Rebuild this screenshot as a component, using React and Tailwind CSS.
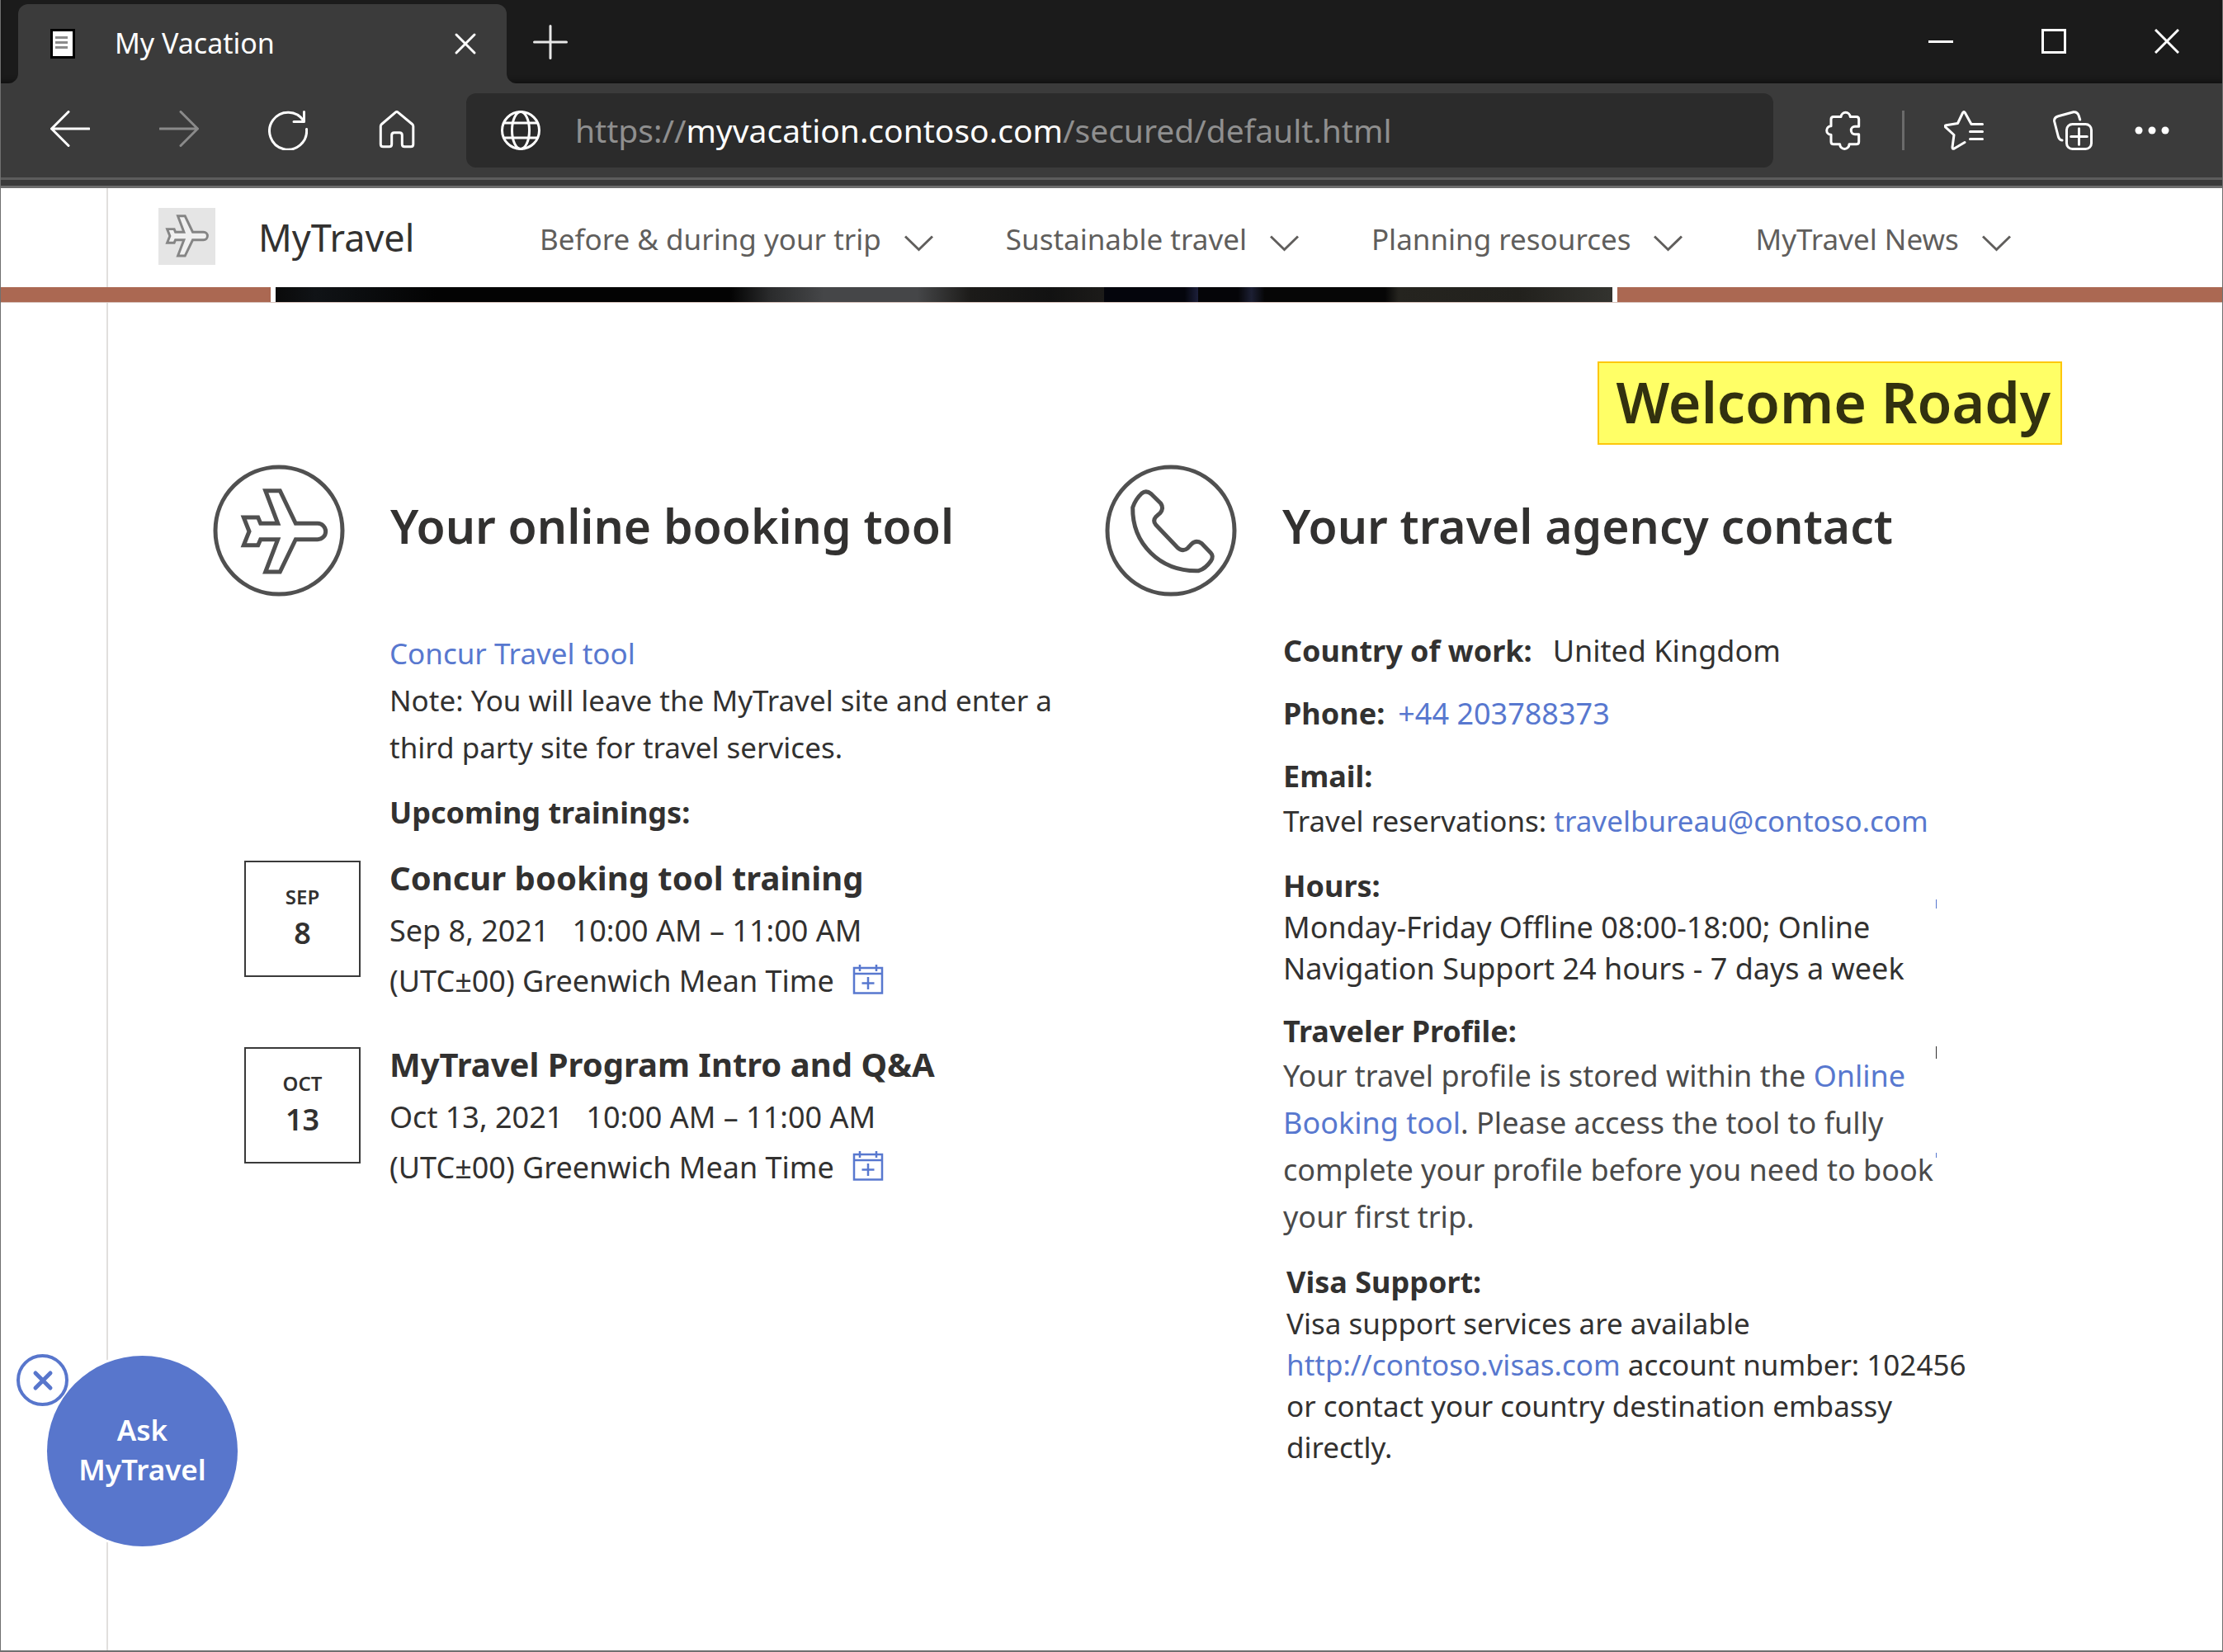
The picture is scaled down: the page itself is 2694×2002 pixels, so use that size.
import React from "react";

const NAV_ITEMS = [
  "Before & during your trip",
  "Sustainable travel",
  "Planning resources",
  "MyTravel News",
];

const TRAININGS = [
  { month: "SEP", day: "8", title: "Concur booking tool training", date: "Sep 8, 2021" },
  { month: "OCT", day: "13", title: "MyTravel Program Intro and Q&A", date: "Oct 13, 2021" },
];

function Icon({ children, className = "", size = 48 }) {
  return (
    <svg
      width={size}
      height={size}
      viewBox="0 0 48 48"
      fill="none"
      stroke="currentColor"
      strokeWidth="3"
      strokeLinecap="round"
      strokeLinejoin="round"
      aria-hidden="true"
      className={"shrink-0 " + className}
    >
      {children}
    </svg>
  );
}

function ToolButton({ label, children, className = "" }) {
  return (
    <button type="button" aria-label={label} className={"flex shrink-0 items-center justify-center " + className}>
      {children}
    </button>
  );
}

function TabStrip() {
  return (
    <div className="flex h-[101px] items-end bg-[#1b1b1b] text-white shadow-[inset_0_-6px_6px_-4px_#0f0f0f]">
      <div className="relative ml-[21px] flex h-24 w-[592px] items-center rounded-t-xl bg-[#3b3b3b] pr-9 pl-[39px]">
        <svg width="30" height="36" viewBox="0 0 30 36" className="shrink-0" aria-hidden="true">
          <rect width="30" height="36" fill="#000" />
          <rect x="3" y="3" width="24" height="30" fill="#fff" />
          <path d="M6 10.500h15M6 16.500h15M6 22.500h15" stroke="#8c8c8c" strokeWidth="3" />
        </svg>
        <span className="ml-12 flex-1 pb-0.5 text-[34px] leading-[48px]">My Vacation</span>
        <button type="button" aria-label="Close tab">
          <svg width="28" height="28" viewBox="0 0 28 28" stroke="#fff" strokeWidth="3" strokeLinecap="round" aria-hidden="true">
            <path d="M3 3l22 22M25 3L3 25" />
          </svg>
        </button>
        <svg width="12" height="12" viewBox="0 0 12 12" fill="#3b3b3b" className="absolute bottom-0 -left-3" aria-hidden="true">
          <path d="M12 0v12H0A12 12 0 0 0 12 0Z" />
        </svg>
        <svg width="12" height="12" viewBox="0 0 12 12" fill="#3b3b3b" className="absolute -right-3 bottom-0" aria-hidden="true">
          <path d="M0 0v12h12A12 12 0 0 1 0 0Z" />
        </svg>
      </div>
      <button type="button" aria-label="New tab" className="mb-[29px] ml-8">
        <svg width="42" height="42" viewBox="0 0 42 42" stroke="#e8e8e8" strokeWidth="3" strokeLinecap="round" aria-hidden="true">
          <path d="M21 1.500v39M1.500 21h39" />
        </svg>
      </button>
      <div className="ml-auto flex items-center gap-[107px] self-start pt-[35px] pr-[52px]">
        <button type="button" aria-label="Minimize">
          <svg width="30" height="30" viewBox="0 0 30 30" stroke="#fff" strokeWidth="3" aria-hidden="true">
            <path d="M0 15.500h30" />
          </svg>
        </button>
        <button type="button" aria-label="Maximize">
          <svg width="30" height="30" viewBox="0 0 30 30" fill="none" stroke="#fff" strokeWidth="3" aria-hidden="true">
            <rect x="1.500" y="1.500" width="27" height="27" />
          </svg>
        </button>
        <button type="button" aria-label="Close window">
          <svg width="30" height="30" viewBox="0 0 30 30" stroke="#fff" strokeWidth="3" aria-hidden="true">
            <path d="M1 1l28 28M29 1L1 29" />
          </svg>
        </button>
      </div>
    </div>
  );
}

function Toolbar() {
  return (
    <div className="flex h-[114px] items-center bg-[#3b3b3b] pl-[60px] pr-[61px] text-white">
      <div className="flex items-center gap-[84px]">
        <ToolButton label="Back">
          <Icon>
            <path d="M47 22H1.500M22 1.500L1.500 22 22 42.500" />
          </Icon>
        </ToolButton>
        <ToolButton label="Forward" className="text-[#8a8a8a]">
          <Icon>
            <path d="M1 22h45.500M26 1.500L46.500 22 26 42.500" />
          </Icon>
        </ToolButton>
        <ToolButton label="Refresh">
          <Icon>
            <path d="M46.500 22.500A22.500 22.500 0 1 1 43 12.500M43.500 1.500v12H31" />
          </Icon>
        </ToolButton>
        <ToolButton label="Home">
          <Icon>
            <path d="M22.300 2.200q1.500-1.300 3 0L42.600 16.500q1.200 1 1.200 2.500v21.700q0 3-3 3h-7.500q-3 0-3-3v-11q0-3-3-3h-6.600q-3 0-3 3v11q0 3-3 3H7.300q-3 0-3-3V19q0-1.500 1.200-2.500Z" />
          </Icon>
        </ToolButton>
      </div>
      <div className="ml-[60px] flex h-[90px] flex-1 items-center rounded-xl bg-[#2b2b2b] pl-[42px]">
        <Icon>
          <circle cx="24" cy="24" r="22.500" />
          <ellipse cx="24" cy="24" rx="10.500" ry="22.500" />
          <path d="M3.500 15h41M3.500 33h41" />
        </Icon>
        <div
          role="textbox"
          aria-label="Address"
          contentEditable
          suppressContentEditableWarning
          className="ml-[42px] flex-1 text-[39px] leading-[56px] text-[#8f8f8f] outline-none"
        >
          https://<span className="text-white">myvacation.contoso.com</span>/secured/default.html
        </div>
      </div>
      <ToolButton label="Extensions" className="ml-[60px]">
        <Icon>
          <path d="M10 18.700V10.500q0-3 3-3h9a5.700 6 0 0 1 11.300 0h7.400q3 0 3 3v8.800H39a4.700 4.700 0 0 0 0 9.400h4.700V37.700q0 3-3 3H32a5.600 5.700 0 0 1-11.300 0H13q-3 0-3-3v-8.400a5.300 5.300 0 0 1 0-10.600Z" />
        </Icon>
      </ToolButton>
      <div className="ml-12 h-12 w-[3px] bg-[#6b6b6b]" />
      <ToolButton label="Favorites" className="ml-12">
        <Icon>
          <path d="M46.500 16.500H33L25.300 2.500q-1.300-2-2.600 0L16.500 15.500 2.500 17.700q-2.500.600-.700 2.500L12 29.500 10 44.500q0 2.500 2.300 1.500L25 38.500M31.500 25.500h15M31.500 34.500h15" />
        </Icon>
      </ToolButton>
      <ToolButton label="Collections" className="ml-[84px]">
        <Icon>
          <path d="M32.700 11L31.300 6.500q-1.500-5.200-6.500-4.800L6.500 6.700Q1 8.200 1.600 13L6.500 32q1.300 3.500 4.500 4" />
          <rect x="16.500" y="16.500" width="30" height="30" rx="7" />
          <path d="M31.500 21.700v19.600M21.700 31.500h19.600" />
        </Icon>
      </ToolButton>
      <ToolButton label="Settings and more" className="ml-12">
        <Icon>
          <g fill="currentColor" stroke="none">
            <circle cx="8" cy="24" r="4.500" />
            <circle cx="24" cy="24" r="4.500" />
            <circle cx="40" cy="24" r="4.500" />
          </g>
        </Icon>
      </ToolButton>
    </div>
  );
}

const PLANE_PATH =
  "M63.700 31.700H81.300L100.300 71.300H127a9.700 9.700 0 0 1 0 19.400H100.300L81.300 130H63.700L78.700 90.700H57.700L54.700 97.700H37.300L44 81 37.300 64H54.700L57.700 71.300H78.700Z";

function SiteHeader() {
  return (
    <header className="flex h-[120px] items-center pl-[62px] text-[#605e5c]">
      <span className="mb-1 flex h-[69px] w-[69px] items-center justify-center bg-[#e5e5e5]">
        <svg width="56" height="56" viewBox="30 24 114 114" fill="#f0f0f0" stroke="#858585" strokeWidth="6" aria-hidden="true">
          <path d={PLANE_PATH} />
        </svg>
      </span>
      <a href="#home" className="ml-[52px] w-[341px] text-[45px] leading-[64px] text-[#323130]">
        MyTravel
      </a>
      <nav className="mt-1 flex gap-[88px]">
        {NAV_ITEMS.map((item) => (
          <button key={item} type="button" className="flex items-center gap-7 text-[35px] leading-[48px] whitespace-nowrap">
            {item}
            <svg width="35" height="20" viewBox="0 0 35 20" fill="none" stroke="currentColor" strokeWidth="3" className="mt-2.5" aria-hidden="true">
              <path d="M1 1.500l16.500 16L34 1.500" />
            </svg>
          </button>
        ))}
      </nav>
    </header>
  );
}

function Banner() {
  return (
    <div className="flex h-[19px] gap-1.5 border-b border-[#d8c4bd]">
      <div className="w-[327px] bg-[#ab6852]" />
      <div className="flex-[1621] bg-[linear-gradient(90deg,#0a0a0a_0%,#101316_3%,#030303_12%,#030303_34%,#2a2b2c_37%,#454648_41%,#454648_48%,#1c1b19_52%,#121212_58%,#1c1b19_62%,#04050c_62%,#04050c_68%,#1c1f3a_69%,#050508_69%,#050508_72%,#1c1f33_73%,#060606_74%,#060606_83%,#25241f_84%,#22211d_93%,#33332f_100%)]" />
      <div className="flex-[734] bg-[#ab6852]" />
    </div>
  );
}

function Link({ children, href = "#link" }) {
  return (
    <a href={href} className="text-[#5878cf]">
      {children}
    </a>
  );
}

function SectionHead({ icon, title }) {
  return (
    <div className="flex items-center gap-[55px]">
      <svg width="160" height="160" viewBox="0 0 160 160" fill="none" stroke="#505050" strokeWidth="5" strokeLinejoin={icon === "phone" ? "round" : "miter"} aria-hidden="true" className="shrink-0">
        <circle cx="80" cy="80" r="77" />
        {icon === "plane" ? (
          <path d={PLANE_PATH} />
        ) : (
          <path d="M33.700 52Q37 42 44.500 35 50 30.500 56 35.500L67.700 47q4 6-.700 11.700l-5.300 4.600q-4 4.700 0 9.700l26 27.300q6.600 6 12.600 1l4.700-5Q110.300 91 117 95.300L128.300 107q4 4.300 0 10Q122 126 113.700 128.700C66 130 33 95 33.700 52Z" />
        )}
      </svg>
      <h2 className="pb-3 text-[57px] leading-[80px] font-semibold whitespace-nowrap">{title}</h2>
    </div>
  );
}

function Training({ month, day, title, date }) {
  return (
    <li className="flex gap-[35px] pl-[38px]">
      <div className="mt-3 flex h-[141px] w-[141px] shrink-0 flex-col items-center border-2 border-[#3a3a3a] pt-[26px] font-semibold">
        <span className="text-[24px] leading-8">{month}</span>
        <span className="text-[36px] leading-[56px]">{day}</span>
      </div>
      <div>
        <h3 className="text-[40px] leading-[66px] font-bold whitespace-nowrap">{title}</h3>
        <p className="flex gap-7 leading-[61px]">
          <span>{date}</span>
          <span>10:00 AM – 11:00 AM</span>
        </p>
        <p className="flex items-center gap-[22px] leading-[61px]">
          (UTC±00) Greenwich Mean Time
          <button type="button" aria-label={"Add " + title + " to calendar"} className="pb-1 text-[#5878cf]">
            <svg width="38" height="36" viewBox="0 0 38 36" fill="none" stroke="currentColor" strokeWidth="2.500" aria-hidden="true">
              <path d="M2 4h34v30.500H2ZM2 11h34M9 0v8M29 0v8M19 15v15M11.500 22.500h15" />
            </svg>
          </button>
        </p>
      </div>
    </li>
  );
}

function BookingColumn() {
  return (
    <section>
      <SectionHead icon="plane" title="Your online booking tool" />
      <p className="mt-10 ml-[214px] text-[35px] leading-[57px] whitespace-nowrap">
        <Link>Concur Travel tool</Link>
        <br />
        Note: You will leave the MyTravel site and enter a
        <br />
        third party site for travel services.
      </p>
      <h3 className="mt-[22px] ml-[214px] leading-[57px] font-bold">Upcoming trainings:</h3>
      <ul className="mt-[18px] flex flex-col gap-[38px]">
        {TRAININGS.map((t) => (
          <Training key={t.title} {...t} />
        ))}
      </ul>
    </section>
  );
}

function ContactColumn() {
  return (
    <section>
      <SectionHead icon="phone" title="Your travel agency contact" />
      <div className="mt-[41px] ml-[216px] flex flex-col gap-[26px] leading-[50px] whitespace-nowrap">
        <p className="flex gap-[25px]">
          <b>Country of work:</b>
          <span>United Kingdom</span>
        </p>
        <p className="flex gap-4">
          <b>Phone:</b>
          <Link href="tel:+44203788373">+44 203788373</Link>
        </p>
        <div>
          <h3 className="font-bold">Email:</h3>
          <p className="text-[35px] leading-[57px]">
            Travel reservations: <Link href="mailto:travelbureau@contoso.com">travelbureau@contoso.com</Link>
          </p>
        </div>
        <div className="relative">
          <h3 className="font-bold">Hours:</h3>
          <p>
            Monday-Friday Offline 08:00-18:00; Online
            <br />
            Navigation Support 24 hours - 7 days a week
          </p>
          <span className="absolute top-[41px] left-[791px] h-[11px] w-px bg-[#5878cf]" />
        </div>
        <div className="relative">
          <h3 className="font-bold">Traveler Profile:</h3>
          <p className="leading-[57px] text-[#4a4a4a]">
            Your travel profile is stored within the{" "}
            <Link>
              Online
              <br />
              Booking tool
            </Link>
            . Please access the tool to fully
            <br />
            complete your profile before you need to book
            <br />
            your first trip.
          </p>
          <span className="absolute top-[43px] left-[791px] h-[15px] w-px bg-[#323130]" />
          <span className="absolute top-[172px] left-[791px] h-1.5 w-px bg-[#5878cf]" />
        </div>
        <div className="pl-1">
          <h3 className="font-bold">Visa Support:</h3>
          <p className="text-[35px]">
            Visa support services are available
            <br />
            <Link href="http://contoso.visas.com">http://contoso.visas.com</Link> account number: 102456
            <br />
            or contact your country destination embassy
            <br />
            directly.
          </p>
        </div>
      </div>
    </section>
  );
}

function ChatBubble() {
  return (
    <div className="absolute bottom-[126px] left-[19px]">
      <button
        type="button"
        className="mt-0.5 ml-[37px] flex h-[231px] w-[231px] items-center justify-center rounded-full bg-[#5876cc] pb-1 text-center text-[35px] leading-[48px] font-semibold text-white ring-3 ring-white"
      >
        Ask
        <br />
        MyTravel
      </button>
      <button
        type="button"
        aria-label="Dismiss chat"
        className="absolute top-0 left-0 flex h-[63px] w-[63px] items-center justify-center rounded-full border-4 border-[#5876cc] bg-white"
      >
        <svg width="26" height="26" viewBox="0 0 26 26" stroke="#5876cc" strokeWidth="5" strokeLinecap="round" aria-hidden="true">
          <path d="M4 4l18 18M22 4L4 22" />
        </svg>
      </button>
    </div>
  );
}

export default function App() {
  return (
    <div className="relative flex min-h-screen flex-col border-x border-b-2 border-[#707070] bg-white font-['Noto_Sans',sans-serif] text-[36px] text-[#323130]">
      <TabStrip />
      <Toolbar />
      <div className="h-[13px] border-y-3 border-t-[#5c5c5c] border-b-[#6e6e6e] bg-[#3b3b3b]" />
      <div className="flex flex-1 flex-col bg-[linear-gradient(#e1dfdd,#e1dfdd)] bg-[size:2px_100%] bg-[position:128px_0] bg-no-repeat">
        <div className="ml-[129px]">
          <SiteHeader />
        </div>
        <Banner />
        <main className="pt-[71px] pl-[257px]">
          <div className="flex justify-end pr-[194px]">
            <h1 className="border-2 border-[#fdc70c] bg-[#ffff66] pr-3 pb-[3px] pl-5 text-[68px] leading-[94px] font-semibold whitespace-nowrap text-[#32310f]">
              Welcome Roady
            </h1>
          </div>
          <div className="mt-6 grid grid-cols-[1081fr_1354fr]">
            <BookingColumn />
            <ContactColumn />
          </div>
        </main>
      </div>
      <ChatBubble />
    </div>
  );
}
